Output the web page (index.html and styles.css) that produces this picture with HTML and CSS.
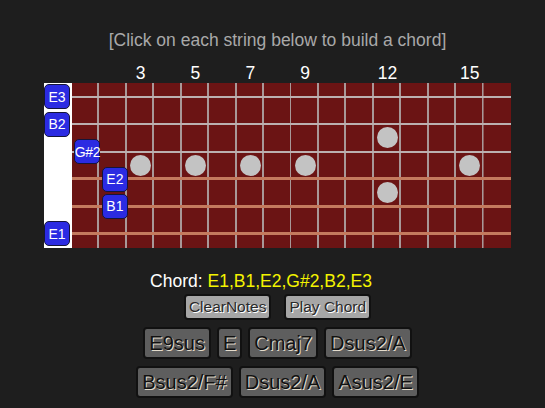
FILE: index.html
```html
<!DOCTYPE html>
<html>
<head>
<meta charset="utf-8">
<title>Chord Builder</title>
<link rel="stylesheet" href="styles.css">
</head>
<body>
<div class="app">
  <div class="hint">[Click on each string below to build a chord]</div>
  <div class="fret-numbers">
    <span class="c3">3</span>
    <span class="c5">5</span>
    <span class="c7">7</span>
    <span class="c9">9</span>
    <span class="c12">12</span>
    <span class="c15">15</span>
  </div>
  <div class="board">
    <div class="dot mid c3"></div>
    <div class="dot mid c5"></div>
    <div class="dot mid c7"></div>
    <div class="dot mid c9"></div>
    <div class="dot hi c12"></div>
    <div class="dot lo c12"></div>
    <div class="dot mid c15"></div>

    <div class="note open s1 c0">E3</div>
    <div class="note open s2 c0">B2</div>
    <div class="note s3 c1 wide">G#2</div>
    <div class="note s4 c2">E2</div>
    <div class="note s5 c2">B1</div>
    <div class="note open s6 c0">E1</div>
  </div>
  <div class="chord-line">Chord: <span class="notes">E1,B1,E2,G#2,B2,E3</span></div>
  <div class="actions">
    <button class="action">ClearNotes</button>
    <button class="action">Play Chord</button>
  </div>
  <div class="chords">
    <button class="chord">E9sus</button>
    <button class="chord">E</button>
    <button class="chord">Cmaj7</button>
    <button class="chord">Dsus2/A</button>
  </div>
  <div class="chords">
    <button class="chord">Bsus2/F#</button>
    <button class="chord">Dsus2/A</button>
    <button class="chord">Asus2/E</button>
  </div>
</div>
</body>
</html>
```

FILE: styles.css
```css
html, body {
  margin: 0;
  padding: 0;
  background: #1e1e1e;
}

body {
  font-family: "Liberation Sans", Arial, sans-serif;
}

.app {
  width: 467px;
  margin-left: 44px;
  display: flex;
  flex-direction: column;
  align-items: center;
}

.hint {
  margin-top: 30px;
  font-size: 17.5px;
  line-height: 20px;
  color: #a9a9a9;
}

.fret-numbers {
  align-self: stretch;
  display: grid;
  grid-template-columns: 28px repeat(16, 1fr);
  margin-top: 13px;
  height: 20px;
  font-size: 17.5px;
  line-height: 20px;
  color: #ffffff;
}

.fret-numbers span {
  text-align: center;
  grid-row: 1;
}

.board {
  align-self: stretch;
  height: 164.6px;
  display: grid;
  grid-template-columns: 28px repeat(16, 1fr);
  grid-template-rows: repeat(6, 1fr);
  background:
    linear-gradient(#ffffff, #ffffff) 0 0 / 28px 100% no-repeat,
    repeating-linear-gradient(180deg, transparent 0 12.7px, #bcb0b0 12.7px 14.7px, transparent 14.7px 27.43px) 28px 0 / calc(100% - 28px) 82.3px no-repeat,
    repeating-linear-gradient(180deg, transparent 0 12.2px, #c47a5e 12.2px 15.2px, transparent 15.2px 27.43px) 28px 82.3px / calc(100% - 28px) 82.3px no-repeat,
    repeating-linear-gradient(90deg, transparent 0 25.44px, #a89898 25.44px 27.4375px) 28px 0 / 411.56px 100% no-repeat,
    #6b1414;
}

/* columns: c0 = open (nut), cN = fret N */
.c0 { grid-column: 1; }
.c1 { grid-column: 2; }
.c2 { grid-column: 3; }
.c3 { grid-column: 4; }
.c5 { grid-column: 6; }
.c7 { grid-column: 8; }
.c9 { grid-column: 10; }
.c12 { grid-column: 13; }
.c15 { grid-column: 16; }

/* strings, top (high E) to bottom (low E) */
.s1 { grid-row: 1; }
.s2 { grid-row: 2; }
.s3 { grid-row: 3; }
.s4 { grid-row: 4; }
.s5 { grid-row: 5; }
.s6 { grid-row: 6; }

.dot {
  width: 21px;
  height: 21px;
  border-radius: 50%;
  background: #c3c3c3;
  align-self: center;
  justify-self: center;
}

.dot.mid { grid-row: 3 / 5; }
.dot.hi { grid-row: 2 / 4; }
.dot.lo { grid-row: 4 / 6; }

.note {
  box-sizing: border-box;
  width: 26px;
  height: 25px;
  align-self: center;
  justify-self: end;
  margin-right: -1px;
  background: #2b2be2;
  border: 1px solid #15153a;
  border-radius: 5px;
  color: #ffffff;
  font-size: 14px;
  display: flex;
  align-items: center;
  justify-content: center;
  white-space: nowrap;
}

.note.open {
  justify-self: start;
  margin-right: 0;
}

.note.wide {
  letter-spacing: -0.4px;
}

.chord-line {
  margin-top: 23px;
  padding-right: 33px;
  font-size: 17.5px;
  line-height: 20px;
  color: #ffffff;
}

.chord-line .notes {
  color: #f4f400;
}

.actions {
  margin-top: 3px;
  display: flex;
  gap: 13px;
}

.action {
  font-family: inherit;
  font-size: 15.5px;
  line-height: 18px;
  padding: 2px 3px;
  border: 2px solid #111111;
  border-radius: 4px;
  background: #a6a6a6;
  color: #2a2a2a;
  text-shadow: 1px 1px 0 #ffffff;
  margin: 0;
}

.chords {
  margin-top: 7px;
  display: flex;
  gap: 6px;
}

.chord {
  font-family: inherit;
  font-size: 20px;
  line-height: 24px;
  padding: 2px 4px;
  border: 2px solid #111111;
  border-radius: 4px;
  background: #5e5e5e;
  color: #111111;
  text-shadow: 1px 1px 0 #e4dccc;
  margin: 0;
}
```
